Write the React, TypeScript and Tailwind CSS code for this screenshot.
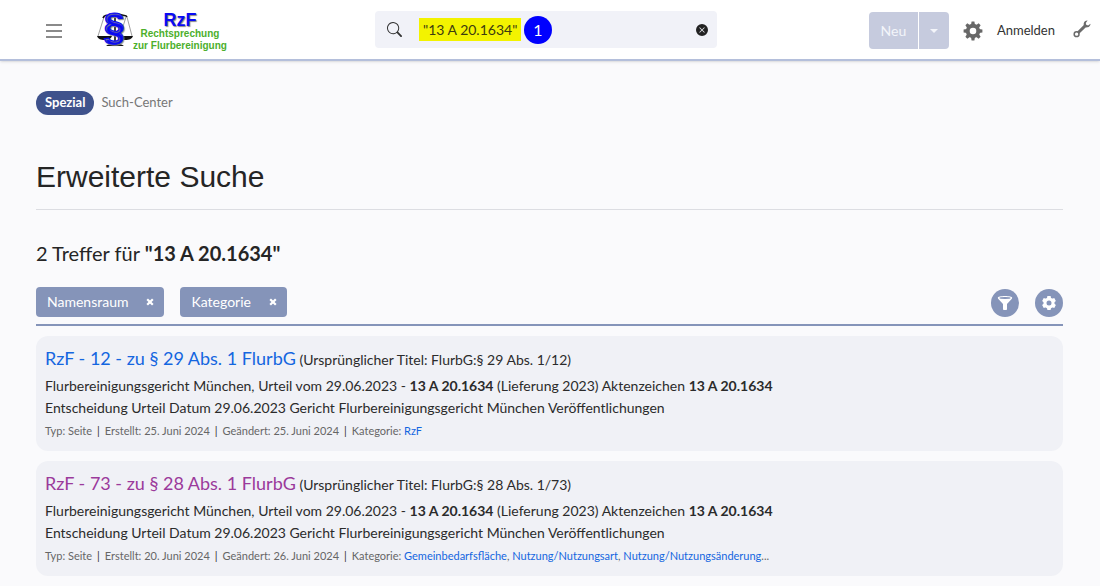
import React from 'react';
import { BsSearch, BsXCircleFill } from 'react-icons/bs';

interface Hit {
  title: string;
  original: string;
  created: string;
  changed: string;
  categories: string[];
  more?: boolean;
  visited?: boolean;
}

const hits: Hit[] = [
  {
    title: 'RzF - 12 - zu § 29 Abs. 1 FlurbG',
    original: 'FlurbG:§ 29 Abs. 1/12',
    created: '25. Juni 2024',
    changed: '25. Juni 2024',
    categories: ['RzF'],
  },
  {
    title: 'RzF - 73 - zu § 28 Abs. 1 FlurbG',
    original: 'FlurbG:§ 28 Abs. 1/73',
    created: '20. Juni 2024',
    changed: '26. Juni 2024',
    categories: ['Gemeinbedarfsfläche', 'Nutzung/Nutzungsart', 'Nutzung/Nutzungsänderung'],
    more: true,
    visited: true,
  },
];

const teeth = [0, 45, 90, 135, 180, 225, 270, 315];

const GearIcon: React.FC<{ className?: string }> = ({ className }) => (
  <svg viewBox="0 0 20 20" className={className} fill="currentColor" aria-hidden="true">
    {teeth.map((angle) => (
      <path key={angle} d="M8 4 8.6.6h2.8L12 4z" transform={`rotate(${angle} 10 10)`} />
    ))}
    <path fillRule="evenodd" d="M10 2.8a7.2 7.2 0 1 0 0 14.4 7.2 7.2 0 0 0 0-14.4zm0 3.9a3.3 3.3 0 1 1 0 6.6 3.3 3.3 0 0 1 0-6.6z" />
  </svg>
);

const CogIcon: React.FC = () => (
  <svg viewBox="0 0 16 16" className="size-4" fill="currentColor" aria-hidden="true">
    {[0, 60, 120, 180, 240, 300].map((angle) => (
      <path key={angle} d="M5.8 4 6.4 1h3.2l.6 3z" transform={`rotate(${angle} 8 8)`} />
    ))}
    <path fillRule="evenodd" d="M8 2.5a5.5 5.5 0 1 0 0 11 5.5 5.5 0 0 0 0-11zm0 3a2.5 2.5 0 1 1 0 5 2.5 2.5 0 0 1 0-5z" />
  </svg>
);

const FunnelIcon: React.FC = () => (
  <svg viewBox="0 0 16 16" className="size-4" aria-hidden="true">
    <path d="M.8 2.8C.8 1.6 4 .9 8 .9s7.2.7 7.2 1.9c0 .6-.3 1-.8 1.5L10 9v5.2c0 .4-.4.7-.8.7H6.8c-.4 0-.8-.3-.8-.7V9L1.6 4.3C1.1 3.8.8 3.4.8 2.8z" fill="currentColor" />
    <ellipse cx="8" cy="3" rx="5.6" ry=".9" fill="#8594b9" />
  </svg>
);

const WrenchIcon: React.FC = () => (
  <svg viewBox="0 0 18 18" className="size-[18px]" aria-hidden="true">
    <path d="M4.6 13.2 12.6 5.4" stroke="#6b6b6b" strokeWidth="3" />
    <circle cx="3.6" cy="14.2" r="2.4" fill="#fff" stroke="#6b6b6b" strokeWidth="1.5" />
    <path d="M14.6.6c-1.8-.2-3.6 1-3.9 2.9-.1.9 0 1.6.3 2.2l1.3 1.3c.7.4 1.5.5 2.3.3 1.7-.3 2.9-1.8 2.9-3.6l-2.4 1.7-1.9-.6-.4-1.9z" fill="#6b6b6b" />
  </svg>
);

const CrossIcon: React.FC = () => (
  <svg viewBox="0 0 8 8" className="size-2" aria-hidden="true">
    <path d="M1.2 1.2 6.8 6.8M6.8 1.2 1.2 6.8" stroke="currentColor" strokeWidth="2.2" />
  </svg>
);

const Scales: React.FC = () => (
  <svg viewBox="0 0 36 42" className="h-[42px] w-9 shrink-0 overflow-visible" aria-hidden="true">
    <path d="M7 8 1 27M8 8l6 19M29 8l-6 19M30 8l5 19" stroke="#888" strokeWidth=".8" fill="none" />
    <path d="M6 9c1-3 4-3 6-2s4 2 6 0 5-2 7-1 4 0 5 2M18 4v32" stroke="#111" strokeWidth="1.6" fill="none" />
    <path d="M0 27h15c-1 3-4 4-7.5 4S1 30 0 27zM21 27h15c-1 3-4 4-7.5 4S22 30 21 27zM9 37c3-3 15-3 18 0z" fill="#111" />
    <text
      x="17"
      y="31"
      textAnchor="middle"
      stroke="#0606f5"
      className="fill-[#0606f5] font-['Liberation_Sans',sans-serif] text-[38px] font-bold [text-shadow:1px_1px_1px_#888]"
    >
      §
    </text>
  </svg>
);

const Header: React.FC = () => (
  <header className="flex h-[61px] items-center border-b-2 border-[#b4bfdb] bg-white pr-2 shadow-sm">
    <div className="flex flex-1 items-center">
      <button aria-label="Menü" className="mt-0.5 ml-[46px] flex w-4 flex-col gap-1">
        <span className="h-0.5 w-full bg-[#8a8a8a]" />
        <span className="h-0.5 w-full bg-[#8a8a8a]" />
        <span className="h-0.5 w-full bg-[#8a8a8a]" />
      </button>
      <a href="#" className="ml-[35px] flex items-center font-['Liberation_Sans',sans-serif] font-bold">
        <Scales />
        <span className="mt-1 flex flex-col items-center text-[10px] leading-3 text-[#4caf2c]">
          <span className="text-lg leading-4 text-[#0a0af5] [text-shadow:1px_1px_1px_#888]">RzF</span>
          <span>Rechtsprechung</span>
          <span>zur Flurbereinigung</span>
        </span>
      </a>
    </div>
    <form role="search" className="flex h-[37px] w-[342px] items-center rounded bg-[#f1f2f8] pr-[9px] pl-3">
      <button type="button" aria-label="Suchen">
        <BsSearch className="size-[15px] text-[#333]" />
      </button>
      <input
        aria-label="Suchbegriff"
        defaultValue={'"13 A 20.1634"'}
        className="ml-[17px] h-[23px] w-[102px] bg-[#f3f300] pl-1 text-sm text-[#3c3c10] outline-none"
      />
      <span className="ml-[3px] flex size-7 items-center justify-center rounded-full bg-[#0000fe] text-base text-white">1</span>
      <button type="button" aria-label="Eingabe löschen" className="ml-auto">
        <BsXCircleFill className="size-3 text-[#222]" />
      </button>
    </form>
    <div className="flex flex-1 items-center justify-end pt-0.5">
      <div className="flex h-[37px] gap-px text-sm text-[#f3f5fa]">
        <button className="w-[49px] rounded-l bg-[#c6cbde]">Neu</button>
        <button aria-label="Weitere Optionen" className="flex w-[30px] items-center justify-center rounded-r bg-[#c6cbde]">
          <svg viewBox="0 0 8 4" className="h-1 w-2" fill="currentColor" aria-hidden="true">
            <path d="M0 0h8L4 4z" />
          </svg>
        </button>
      </div>
      <button aria-label="Einstellungen" className="ml-[14px] text-[#686868]">
        <GearIcon className="size-5" />
      </button>
      <a href="#" className="ml-[14px] text-[13px] text-[#333]">Anmelden</a>
      <button aria-label="Werkzeuge" className="mr-px mb-1 ml-[18px]">
        <WrenchIcon />
      </button>
    </div>
  </header>
);

const FilterTag: React.FC<{ label: string }> = ({ label }) => (
  <span className="flex h-[30px] items-center gap-[18px] rounded bg-[#8594b9] pr-[10px] pl-[11px] text-sm text-white">
    {label}
    <button aria-label={`${label} entfernen`}>
      <CrossIcon />
    </button>
  </span>
);

const ResultCard: React.FC<{ hit: Hit }> = ({ hit }) => (
  <article className="rounded-xl bg-[#f0f1f6] px-[9px] pt-2 pb-2 text-sm text-[#2b2b2b]">
    <h2 className="leading-[31px]">
      <a href="#" className={hit.visited ? 'text-lg text-[#9b3a9b]' : 'text-lg text-[#1466e0]'}>
        {hit.title}
      </a>{' '}
      (Ursprünglicher Titel: {hit.original})
    </h2>
    <p className="leading-[22px]">
      Flurbereinigungsgericht München, Urteil vom 29.06.2023 - <b>13 A 20.1634</b> (Lieferung 2023) Aktenzeichen{' '}
      <b>13 A 20.1634</b>
      <br />
      Entscheidung Urteil Datum 29.06.2023 Gericht Flurbereinigungsgericht München Veröffentlichungen
    </p>
    <ul className="flex text-[11px] leading-6 text-[#666]">
      <li>Typ: Seite</li>
      <li className="before:mx-[5px] before:text-[#333] before:content-['|']">Erstellt: {hit.created}</li>
      <li className="before:mx-[5px] before:text-[#333] before:content-['|']">Geändert: {hit.changed}</li>
      <li className="before:mx-[5px] before:text-[#333] before:content-['|']">
        Kategorie:{' '}
        {hit.categories.map((category, i) => (
          <React.Fragment key={category}>
            {i > 0 && ', '}
            <a href="#" className="text-[#1466e0]">{category}</a>
          </React.Fragment>
        ))}
        {hit.more && '...'}
      </li>
    </ul>
  </article>
);

const App: React.FC = () => {
  return (
    <div className="min-h-screen bg-[#fafafc] font-[Lato,sans-serif] text-[#252525]">
      <Header />
      <main className="pt-[30px] pr-[37px] pl-9">
        <nav className="flex items-center gap-[7px] text-[13px]">
          <a href="#" className="flex h-6 items-center rounded-full bg-[#3f528c] px-[9px] font-bold text-white">Spezial</a>
          <span className="text-[#777]">Such-Center</span>
        </nav>
        <h1 className="mt-10 border-b border-[#dcdde2] pb-[10px] font-['Liberation_Sans',sans-serif] text-3xl leading-[44px]">
          Erweiterte Suche
        </h1>
        <p className="mt-[29px] text-xl leading-7">
          2 Treffer für <b>"13 A 20.1634"</b>
        </p>
        <div className="mt-5 flex items-end gap-4 border-b-2 border-[#8594b9] pb-[7px]">
          <FilterTag label="Namensraum" />
          <FilterTag label="Kategorie" />
          <button aria-label="Filter" className="ml-auto flex size-7 items-center justify-center rounded-full bg-[#8594b9] text-white">
            <FunnelIcon />
          </button>
          <button aria-label="Suchoptionen" className="flex size-7 items-center justify-center rounded-full bg-[#8594b9] text-white">
            <CogIcon />
          </button>
        </div>
        <section className="mt-[10px] flex flex-col gap-[10px] pb-[10px]">
          {hits.map((hit) => (
            <ResultCard key={hit.title} hit={hit} />
          ))}
        </section>
      </main>
    </div>
  );
};

export default App;
